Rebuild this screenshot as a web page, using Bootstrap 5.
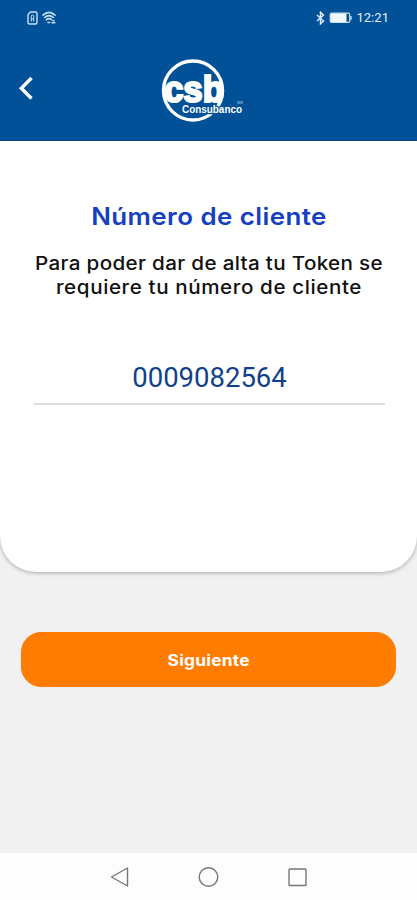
<!DOCTYPE html>
<html lang="es">
<head>
<meta charset="utf-8">
<meta name="viewport" content="width=device-width, initial-scale=1">
<title>Número de cliente</title>
<link rel="stylesheet" href="https://cdn.jsdelivr.net/npm/bootstrap@5.3.0/dist/css/bootstrap.min.css">
<style>
  body { background: #f1f1f1; font-family: Inter, "Open Sans", sans-serif; }
  svg { display: block; flex: none; }
  .app-header { background: #005197; height: 141px; }
  .status-bar { height: 36px; padding: 0 28px 0 27px; }
  .status-time { font: 13px/18px Roboto, sans-serif; letter-spacing: .05px; color: #e3eff9; }
  .title-bar { height: 105px; display: grid; grid-template-columns: 160px 1fr; }
  .back-btn { margin: 40px 0 0 18px; }
  .brand-logo { margin-top: 20px; }
  .client-panel { height: 431px; padding: 62px 33px 0; border-radius: 0 0 36px 36px; box-shadow: 0 1px 4px rgba(0,0,0,.3); }
  .panel-title { color: #1540bf; font-size: 24px; line-height: 28px; font-weight: 600; letter-spacing: .4px; margin-bottom: 20px; transform: translateX(.5px) scaleX(1.08); }
  .panel-text { color: #111; font-size: 18.5px; line-height: 24px; font-weight: 500; letter-spacing: .3px; white-space: nowrap; transform: translateX(.5px) scaleX(1.114); }
  .panel-text-end { letter-spacing: .53px; }
  .client-number { color: #113f8b; font: 27.5px/36px Roboto, sans-serif; margin: 61px -1px 0 1px; height: 45px; border-bottom: 2px solid #dedede; }
  .next-btn { --bs-btn-color: #fff; --bs-btn-bg: #ff7c03; --bs-btn-border-color: #ff7c03; --bs-btn-hover-color: #fff; --bs-btn-hover-bg: #ed7200; height: 55px; border-radius: 20px; font-size: 15.5px; font-weight: 700; letter-spacing: .2px; margin: 60px 21px 0; padding-top: 9px; }
  .next-label { display: inline-block; transform: scaleX(1.12); }
  .system-nav { height: 47px; background: #fdfdfd; }
</style>
</head>
<body class="vh-100 overflow-hidden">
<div class="d-flex flex-column vh-100">
  <header class="app-header flex-shrink-0">
    <div class="status-bar d-flex align-items-center justify-content-between">
      <div class="d-flex align-items-center gap-1">
        <svg width="11" height="14" viewBox="0 0 11 14" fill="none" stroke="#c9dff0" stroke-width="1.4"><path d="M3.5 1H8.5Q10 1 10 2.5V11.5Q10 13 8.5 13H2.5Q1 13 1 11.5V3.5Z"/><path d="M4.3 10.5V5.5Q4.3 4 5.5 4T6.7 5.5V10.5M4.3 8H6.7" stroke-width="1"/></svg>
        <svg width="15" height="14" viewBox="0 0 15 14" fill="none" stroke="#c9dff0" stroke-width="1.6" stroke-linecap="round"><path d="M1 4.2Q7 -1.5 13 4.2M2.7 6.5Q7 2.6 11.3 6.5M4.5 8.7Q7 6.6 9.5 8.7M6 11.5H7.5M10 11.8H12.8M11 9.8H12"/></svg>
      </div>
      <div class="d-flex align-items-center">
        <svg width="9" height="14" viewBox="0 0 9 14" fill="none" stroke="#d9e9f5" stroke-width="1.5"><path d="M1 4L7.5 10L4.5 12.8V1.2L7.5 4L1 10"/></svg>
        <svg class="ms-1" width="23" height="12" viewBox="0 0 23 12"><rect x="1.2" y="1.2" width="19.5" height="9.2" rx="1.5" fill="none" stroke="#c9dff0" stroke-width="1.2"/><rect x="1.5" y="1.5" width="16" height="8.6" fill="#f2f7fc"/><path d="M22 4V8" stroke="#c9dff0" stroke-width="1.4"/></svg>
        <span class="status-time ms-1">12:21</span>
      </div>
    </div>
    <div class="title-bar">
      <a href="#" class="back-btn" aria-label="Atrás">
        <svg width="17" height="24" viewBox="0 0 17 24" fill="none" stroke="#fff" stroke-width="3.4"><path d="M13.5 2L3.3 12.3L13.5 22.5"/></svg>
      </a>
      <svg class="brand-logo" width="92" height="70" viewBox="-2 0 92 70" role="img" aria-label="CSB Consubanco">
        <circle cx="31" cy="34.5" r="29.5" fill="none" stroke="#fff" stroke-width="3.4"/>
        <text x="2" y="46" textLength="60" lengthAdjust="spacingAndGlyphs" font-family="Liberation Sans, sans-serif" font-weight="700" font-size="37" fill="#fff" stroke="#fff" stroke-width="2.2">csb</text>
        <text x="20" y="57" textLength="60" lengthAdjust="spacingAndGlyphs" font-family="Liberation Sans, sans-serif" font-weight="700" font-size="10" fill="#fff" stroke="#005197" stroke-width="2.4" paint-order="stroke">Consubanco</text>
        <text x="75" y="47.5" font-family="Liberation Sans, sans-serif" font-size="4" fill="#b7d0e6">MR</text>
      </svg>
    </div>
  </header>
  <main class="flex-grow-1 d-flex flex-column">
    <section class="client-panel bg-white text-center">
      <h1 class="panel-title">Número de cliente</h1>
      <p class="panel-text mb-0">Para poder dar de alta tu Token se<br><span class="panel-text-end">requiere tu número de cliente</span></p>
      <div class="client-number">0009082564</div>
    </section>
    <button type="button" class="btn next-btn"><span class="next-label">Siguiente</span></button>
  </main>
  <nav class="system-nav flex-shrink-0" aria-label="Sistema">
    <svg width="417" height="47" viewBox="0 0 417 47" fill="none" stroke="#777" stroke-width="1.4" stroke-linejoin="round"><path d="M111.5 24L127.5 15V33Z"/><circle cx="208.5" cy="24" r="9.3"/><rect x="289" y="16" width="17" height="16.5" rx=".8"/></svg>
  </nav>
</div>
<script src="https://cdn.jsdelivr.net/npm/bootstrap@5.3.0/dist/js/bootstrap.bundle.min.js"></script>
</body>
</html>
